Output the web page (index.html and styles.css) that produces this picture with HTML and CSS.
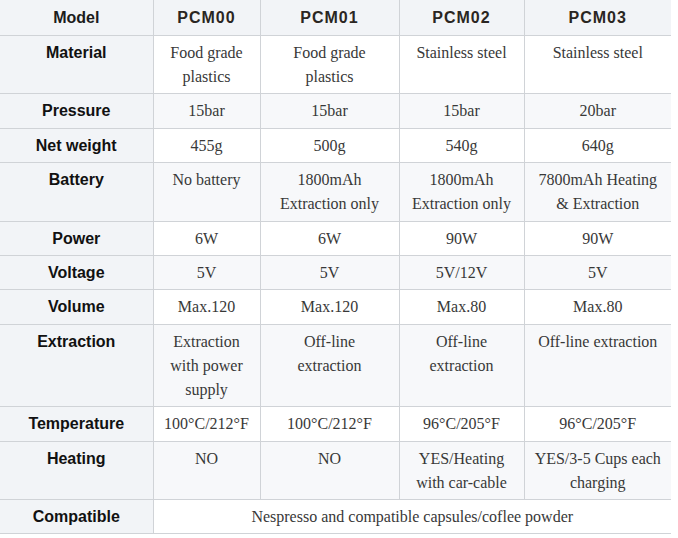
FILE: index.html
```html
<!DOCTYPE html>
<html>
<head>
<meta charset="utf-8">
<link rel="stylesheet" href="styles.css">
</head>
<body>
<table class="spec">
  <colgroup>
    <col class="c0"><col class="c1"><col class="c2"><col class="c3"><col class="c4">
  </colgroup>
  <tr class="head">
    <th>Model</th><th class="model">PCM00</th><th class="model">PCM01</th><th class="model">PCM02</th><th class="model">PCM03</th>
  </tr>
  <tr>
    <th>Material</th><td>Food grade plastics</td><td>Food grade plastics</td><td>Stainless steel</td><td>Stainless steel</td>
  </tr>
  <tr>
    <th>Pressure</th><td>15bar</td><td>15bar</td><td>15bar</td><td>20bar</td>
  </tr>
  <tr>
    <th>Net weight</th><td>455g</td><td>500g</td><td>540g</td><td>640g</td>
  </tr>
  <tr>
    <th>Battery</th><td>No battery</td><td>1800mAh Extraction only</td><td>1800mAh Extraction only</td><td>7800mAh Heating &amp; Extraction</td>
  </tr>
  <tr>
    <th>Power</th><td>6W</td><td>6W</td><td>90W</td><td>90W</td>
  </tr>
  <tr>
    <th>Voltage</th><td>5V</td><td>5V</td><td>5V/12V</td><td>5V</td>
  </tr>
  <tr>
    <th>Volume</th><td>Max.120</td><td>Max.120</td><td>Max.80</td><td>Max.80</td>
  </tr>
  <tr>
    <th>Extraction</th><td>Extraction with power supply</td><td>Off-line extraction</td><td>Off-line extraction</td><td>Off-line extraction</td>
  </tr>
  <tr class="temp">
    <th>Temperature</th><td>100°C/212°F</td><td>100°C/212°F</td><td>96°C/205°F</td><td>96°C/205°F</td>
  </tr>
  <tr>
    <th>Heating</th><td>NO</td><td>NO</td><td>YES/Heating with car-cable</td><td>YES/3-5 Cups each charging</td>
  </tr>
  <tr>
    <th>Compatible</th><td colspan="4">Nespresso and compatible capsules/coflee powder</td>
  </tr>
</table>
</body>
</html>
```
FILE: styles.css
```css
html, body {
  margin: 0;
  padding: 0;
  background: #ffffff;
}

.spec {
  width: 671px;
  border-collapse: collapse;
  table-layout: fixed;
}

.c0 { width: 153px; }
.c1 { width: 107px; }
.c2 { width: 139px; }
.c3 { width: 125px; }
.c4 { width: 147px; }

.spec th,
.spec td {
  padding: 5px 11px 4.4px;
  line-height: 24px;
  text-align: center;
  vertical-align: top;
  border-bottom: 1px solid #d0d3d7;
  border-right: 1px solid #d0d3d7;
}

.spec th:last-child,
.spec td:last-child {
  border-right: none;
}

.spec td:nth-child(5) {
  padding-left: 8px;
  padding-right: 8px;
}

.spec th {
  font-family: "Liberation Sans", Arial, sans-serif;
  font-weight: bold;
  font-size: 16px;
  color: #111111;
  background: #f2f4f7;
}

.spec .head th {
  padding-top: 6px;
  padding-bottom: 5px;
  color: #1c1c1c;
}

.spec .head .model {
  color: #2a2622;
  letter-spacing: 1px;
}

.spec td {
  font-family: "Liberation Serif", "Times New Roman", serif;
  font-size: 16px;
  color: #383838;
  background: #ffffff;
}

.spec .temp td {
  white-space: nowrap;
  padding-left: 4px;
  padding-right: 4px;
}

.spec tr:nth-child(odd) td {
  background: #f7f8fa;
}
```
